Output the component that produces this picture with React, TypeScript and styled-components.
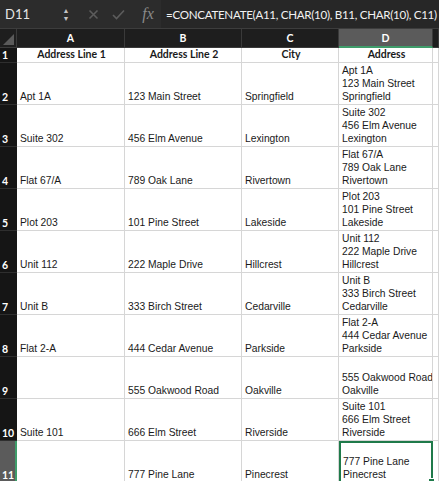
import { createGlobalStyle, styled } from "styled-components"

const Global = createGlobalStyle`
    html, body {
        margin: 0;
        padding: 0;
        background: #ffffff;
    }
    * {
        box-sizing: border-box;
    }
`

const Sheet = styled.div`
    width: 439px;
    height: 481px;
    overflow: hidden;
    background: #ffffff;
    font-family: 'Liberation Sans', Arial, sans-serif;
`

const FormulaBar = styled.div`
    height: 29px;
    display: flex;
    align-items: center;
    background: #2c2c2c;
    color: #d8d8d8;
    font-family: Lato, 'Open Sans', sans-serif;
    border-bottom: 1px solid #3d3d3d;
`

const NameBox = styled.div`
    width: 57px;
    height: 100%;
    display: flex;
    align-items: center;
    padding-left: 5px;
    font-size: 13px;
    color: #e6e6e6;
`

const Spinner = styled.div`
    width: 24px;
    padding-right: 6px;
    display: flex;
    flex-direction: column;
    align-items: center;
    gap: 2px;
    color: #c4c4c4;
    font-size: 7px;
    line-height: 6px;
`

const ToolIcon = styled.div`
    width: 25px;
    display: flex;
    justify-content: center;
    color: #5c5c5c;
`

const Fx = styled.div`
    width: 30px;
    padding-left: 4px;
    font-family: 'Liberation Serif', 'Times New Roman', serif;
    font-style: italic;
    font-size: 16px;
    color: #8a8a8a;
    text-align: center;
`

const Formula = styled.div`
    flex: 1;
    height: 100%;
    display: flex;
    align-items: center;
    padding-left: 5px;
    background: #272727;
    font-size: 11.6px;
    letter-spacing: -0.3px;
    color: #f2f2f2;
    white-space: nowrap;
    overflow: hidden;
`

const Grid = styled.div`
    display: grid;
    grid-template-columns: 17px 108px 117px 97px 94px 1fr;
    grid-template-rows: 19px 15px repeat(9, 42px) 42px;
`

const Corner = styled.div`
    background: #1e1e1e;
    border-right: 1px solid #3a3a3a;
    border-bottom: 1px solid #3a3a3a;
    position: relative;
    &::after {
        content: '';
        position: absolute;
        right: 2px;
        bottom: 2px;
        border-left: 11px solid transparent;
        border-bottom: 11px solid #5a5a5a;
    }
`

const ColHead = styled.div<{ $active?: boolean }>`
    background: ${p => (p.$active ? "#5b5b5b" : "#1e1e1e")};
    color: #ffffff;
    font-family: Lato, 'Open Sans', sans-serif;
    font-weight: 700;
    font-size: 10.5px;
    display: flex;
    align-items: center;
    justify-content: center;
    border-right: 1px solid #3a3a3a;
    border-bottom: ${p => (p.$active ? "2px solid #3f9c6a" : "1px solid #3a3a3a")};
`

const RowHead = styled.div<{ $active?: boolean }>`
    background: ${p => (p.$active ? "#5b5b5b" : "#151515")};
    color: #ffffff;
    font-family: Lato, 'Open Sans', sans-serif;
    font-weight: 700;
    font-size: 10.5px;
    display: flex;
    align-items: flex-end;
    padding: 0 0 1px 2px;
    border-bottom: 1px solid #2e2e2e;
    border-right: ${p => (p.$active ? "2px solid #3f9c6a" : "none")};
`

const Cell = styled.div<{ $title?: boolean; $selected?: boolean }>`
    position: relative;
    border-right: 1px solid #d6d6d6;
    border-bottom: 1px solid #d6d6d6;
    font-family: ${p => (p.$title ? "Lato, 'Open Sans', sans-serif" : "'Liberation Sans', Arial, sans-serif")};
    font-weight: ${p => (p.$title ? 700 : 400)};
    font-size: ${p => (p.$title ? "10.5px" : "10.3px")};
    color: #1a1a1a;
    line-height: 13px;
    display: flex;
    flex-direction: column;
    justify-content: ${p => (p.$title ? "center" : "flex-end")};
    align-items: ${p => (p.$title ? "center" : "flex-start")};
    padding: 0 1px 1px 3px;
    white-space: nowrap;
    overflow: hidden;
    ${p =>
        p.$selected &&
        `
        border: 2px solid #1f7a4a;
        padding: 0 0 0 2px;
        overflow: visible;
        &::after {
            content: '';
            position: absolute;
            right: -4px;
            bottom: -4px;
            width: 5px;
            height: 5px;
            background: #1f7a4a;
            border: 1px solid #ffffff;
        }
    `}
`

const rows = [
    ["Apt 1A", "123 Main Street", "Springfield"],
    ["Suite 302", "456 Elm Avenue", "Lexington"],
    ["Flat 67/A", "789 Oak Lane", "Rivertown"],
    ["Plot 203", "101 Pine Street", "Lakeside"],
    ["Unit 112", "222 Maple Drive", "Hillcrest"],
    ["Unit B", "333 Birch Street", "Cedarville"],
    ["Flat 2-A", "444 Cedar Avenue", "Parkside"],
    ["", "555 Oakwood Road", "Oakville"],
    ["Suite 101", "666 Elm Street", "Riverside"],
    ["", "777 Pine Lane", "Pinecrest"],
]

export default () => <>
    <Global />
    <Sheet>
        <FormulaBar>
            <NameBox>D11</NameBox>
            <Spinner>
                <span>▲</span>
                <span>▼</span>
            </Spinner>
            <ToolIcon>
                <svg width="11" height="11" viewBox="0 0 11 11">
                    <path d="M1.5 1.5 L9.5 9.5 M9.5 1.5 L1.5 9.5" stroke="currentColor" strokeWidth="1.6" />
                </svg>
            </ToolIcon>
            <ToolIcon>
                <svg width="13" height="11" viewBox="0 0 13 11">
                    <path d="M1 6 L4.5 9.5 L12 1.5" stroke="currentColor" strokeWidth="1.6" fill="none" />
                </svg>
            </ToolIcon>
            <Fx>fx</Fx>
            <Formula>=CONCATENATE(A11, CHAR(10), B11, CHAR(10), C11)</Formula>
        </FormulaBar>
        <Grid>
            <Corner />
            <ColHead>A</ColHead>
            <ColHead>B</ColHead>
            <ColHead>C</ColHead>
            <ColHead $active>D</ColHead>
            <ColHead />

            <RowHead>1</RowHead>
            <Cell $title>Address Line 1</Cell>
            <Cell $title>Address Line 2</Cell>
            <Cell $title>City</Cell>
            <Cell $title>Address</Cell>
            <Cell />

            {rows.map((r, i) => {
                const last = i === rows.length - 1
                return [
                    <RowHead key={`h${i}`} $active={last}>{i + 2}</RowHead>,
                    <Cell key={`a${i}`}>{r[0]}</Cell>,
                    <Cell key={`b${i}`}>{r[1]}</Cell>,
                    <Cell key={`c${i}`}>{r[2]}</Cell>,
                    <Cell key={`d${i}`} $selected={last}>
                        {r[0] ? <span>{r[0]}</span> : <span>&nbsp;</span>}
                        <span>{r[1]}</span>
                        <span>{r[2]}</span>
                    </Cell>,
                    <Cell key={`e${i}`} />,
                ]
            })}
        </Grid>
    </Sheet>
</>
